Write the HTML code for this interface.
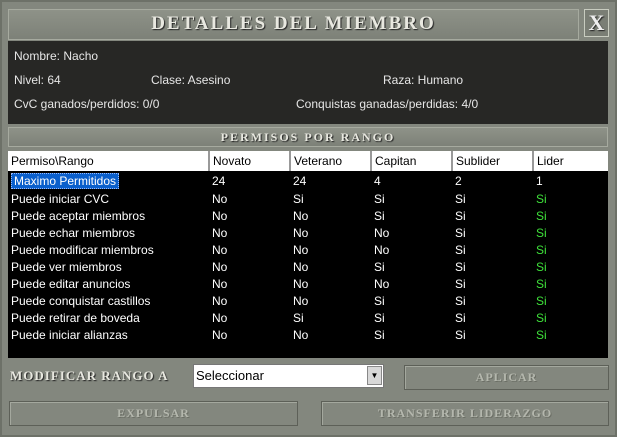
<!DOCTYPE html>
<html><head><style>
body{margin:0;width:617px;height:437px;overflow:hidden;background:#83877e;font-family:"Liberation Sans",sans-serif;position:relative}
.a{position:absolute}
.stone{background:linear-gradient(180deg,#8e9288,#7d8178);}
.t{font-family:"Liberation Serif",serif;color:#e8e8e0;letter-spacing:2px;text-shadow:1px 1px 1px #222}
.info{color:#e6e6e6;font-size:12px}
.btn{border:1px solid #5d6058;box-shadow:inset 1px 1px 0 #a4a89e;font-family:"Liberation Serif",serif;font-weight:bold;color:#b4b7ad;font-size:12px;letter-spacing:1px;text-align:center;line-height:22px;text-shadow:1px 1px 0 #6c6f66}
table{border-collapse:collapse;font-size:12px;color:#fff}
td{padding:0 0 0 3px;height:17px;}
.g{color:#3ee03a}
</style></head><body>
<div class="a" style="left:0;top:0;width:617px;height:437px;border:2px solid #6d7168;box-sizing:border-box"></div>
<div class="a stone" style="left:8px;top:9px;width:571px;height:31px;border:1px solid #a6aa9f;box-sizing:border-box"></div>
<div class="a t" style="left:8px;top:11px;width:571px;text-align:center;font-size:19px;line-height:26px;font-weight:bold">DETALLES DEL MIEMBRO</div>
<div class="a" style="left:584px;top:9px;width:25px;height:28px;border:1px solid #c8ccc0;background:#7a7e75;box-sizing:border-box;color:#eee;font-family:'Liberation Serif',serif;font-weight:bold;font-size:22px;text-align:center;line-height:26px;text-shadow:1px 1px 1px #222">X</div>
<div class="a" style="left:8px;top:41px;width:600px;height:83px;background:#272725"></div>
<div class="a info" style="left:14px;top:49px">Nombre: Nacho</div>
<div class="a info" style="left:14px;top:73px">Nivel: 64</div>
<div class="a info" style="left:151px;top:73px">Clase: Asesino</div>
<div class="a info" style="left:383px;top:73px">Raza: Humano</div>
<div class="a info" style="left:14px;top:97px">CvC ganados/perdidos: 0/0</div>
<div class="a info" style="left:296px;top:97px">Conquistas ganadas/perdidas: 4/0</div>
<div class="a stone" style="left:8px;top:127px;width:600px;height:20px;border:1px solid #a6aa9f;box-sizing:border-box"></div>
<div class="a t" style="left:8px;top:128px;width:600px;text-align:center;font-size:12px;line-height:18px;font-weight:bold">PERMISOS POR RANGO</div>
<div class="a" style="left:8px;top:151px;width:600px;height:207px;background:#000"></div>
<table class="a" style="left:8px;top:151px;width:600px">
<tr style="background:#fff;color:#000"><td style="height:20px;width:197px;border-right:2px solid #999">Permiso\Rango</td><td style="width:76px;border-right:2px solid #999">Novato</td><td style="width:76px;border-right:2px solid #999">Veterano</td><td style="width:76px;border-right:2px solid #999">Capitan</td><td style="width:76px;border-right:2px solid #999">Sublider</td><td>Lider</td></tr>
<tr><td style="height:19px"><span style="background:#0a5fcc;padding:0 2px;border:1px dotted #9bf">Maximo Permitidos</span></td><td>24</td><td>24</td><td>4</td><td>2</td><td>1</td></tr>
<tr><td>Puede iniciar CVC</td><td>No</td><td>Si</td><td>Si</td><td>Si</td><td class="g">Si</td></tr>
<tr><td>Puede aceptar miembros</td><td>No</td><td>No</td><td>Si</td><td>Si</td><td class="g">Si</td></tr>
<tr><td>Puede echar miembros</td><td>No</td><td>No</td><td>No</td><td>Si</td><td class="g">Si</td></tr>
<tr><td>Puede modificar miembros</td><td>No</td><td>No</td><td>No</td><td>Si</td><td class="g">Si</td></tr>
<tr><td>Puede ver miembros</td><td>No</td><td>No</td><td>Si</td><td>Si</td><td class="g">Si</td></tr>
<tr><td>Puede editar anuncios</td><td>No</td><td>No</td><td>No</td><td>Si</td><td class="g">Si</td></tr>
<tr><td>Puede conquistar castillos</td><td>No</td><td>No</td><td>Si</td><td>Si</td><td class="g">Si</td></tr>
<tr><td>Puede retirar de boveda</td><td>No</td><td>Si</td><td>Si</td><td>Si</td><td class="g">Si</td></tr>
<tr><td>Puede iniciar alianzas</td><td>No</td><td>No</td><td>Si</td><td>Si</td><td class="g">Si</td></tr>
</table>
<div class="a t" style="left:10px;top:368px;font-size:13px;letter-spacing:1px;font-weight:bold">MODIFICAR RANGO A</div>
<div class="a" style="left:193px;top:364px;width:191px;height:24px;background:#fff;border:1px solid #777;box-sizing:border-box;font-size:13px;line-height:22px;padding-left:2px">Seleccionar</div>
<div class="a" style="left:367px;top:366px;width:15px;height:19px;background:#d8d8d8;border:1px solid #888;box-sizing:border-box;font-size:8px;text-align:center;line-height:17px">▼</div>
<div class="a btn" style="left:404px;top:365px;width:203px;height:23px">APLICAR</div>
<div class="a btn" style="left:9px;top:401px;width:287px;height:23px">EXPULSAR</div>
<div class="a btn" style="left:321px;top:401px;width:286px;height:23px">TRANSFERIR LIDERAZGO</div>
</body></html>
